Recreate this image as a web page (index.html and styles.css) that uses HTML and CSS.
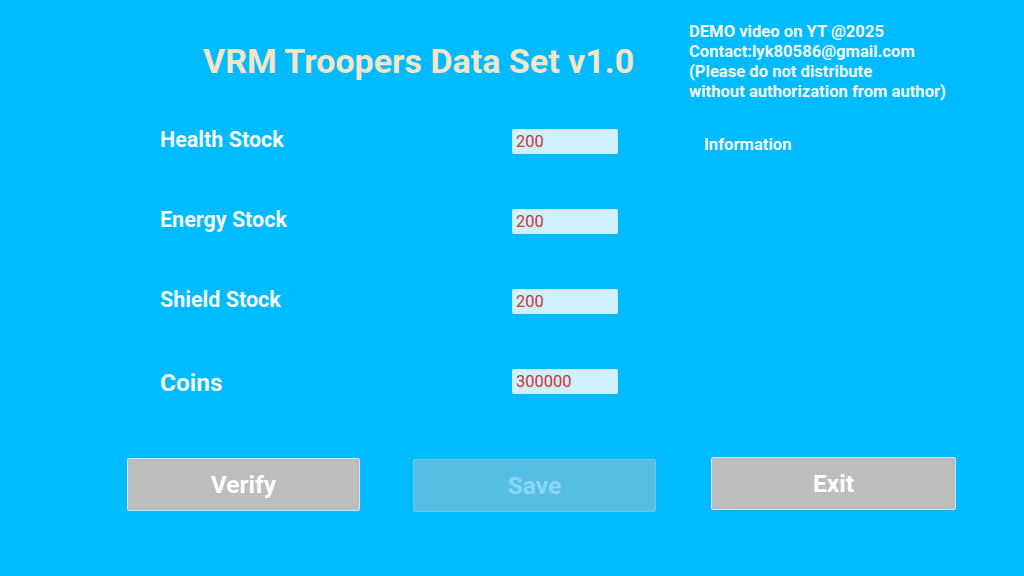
FILE: index.html
```html
<!DOCTYPE html>
<html lang="en">
<head>
<meta charset="utf-8">
<title>VRM Troopers Data Set v1.0</title>
<link rel="stylesheet" href="styles.css">
</head>
<body>
<div class="screen">
  <div class="top">
    <main class="main">
      <h1 class="title">VRM Troopers Data Set v1.0</h1>
      <form class="form">
        <div class="row">
          <label class="label">Health Stock</label>
          <input class="field" type="text" value="200">
        </div>
        <div class="row">
          <label class="label">Energy Stock</label>
          <input class="field" type="text" value="200">
        </div>
        <div class="row">
          <label class="label">Shield Stock</label>
          <input class="field" type="text" value="200">
        </div>
        <div class="row">
          <label class="label label-big">Coins</label>
          <input class="field" type="text" value="300000">
        </div>
      </form>
    </main>
    <aside class="aside">
      <p class="notes">DEMO video on YT @2025<br>Contact:lyk80586@gmail.com<br>(Please do not distribute<br>without authorization from author)</p>
      <p class="info">Information</p>
    </aside>
  </div>
  <div class="buttons">
    <button class="btn btn-verify">Verify</button>
    <button class="btn btn-save" disabled>Save</button>
    <button class="btn btn-exit">Exit</button>
  </div>
</div>
</body>
</html>
```
FILE: styles.css
```css
html, body {
  margin: 0;
  padding: 0;
}
body {
  width: 1024px;
  height: 576px;
  overflow: hidden;
  background: #00bbff;
  font-family: Roboto, "Liberation Sans", Arial, sans-serif;
}
.screen {
  display: flex;
  flex-direction: column;
}
.top {
  display: flex;
  align-items: flex-start;
}
.main {
  width: 689px;
  padding-top: 41px;
}
.title {
  margin: 0 0 0 203px;
  font-size: 34px;
  line-height: 40px;
  font-weight: 700;
  color: #f3e5c6;
  white-space: nowrap;
}
.form {
  margin: 47px 0 0 0;
  padding-left: 160px;
  display: flex;
  flex-direction: column;
  gap: 54px;
}
.row {
  display: flex;
  align-items: center;
  height: 26px;
}
.label {
  width: 352px;
  font-size: 21.5px;
  font-weight: 700;
  color: #f2f9ff;
  line-height: 26px;
  margin-top: -3px;
}
.label-big {
  font-size: 24.5px;
  margin-top: 3px;
}
.field {
  box-sizing: border-box;
  width: 106px;
  height: 25px;
  border: none;
  border-radius: 2px;
  background: #cff0ff;
  color: #d03030;
  font-family: Roboto, "Liberation Sans", Arial, sans-serif;
  font-size: 16.5px;
  padding: 0 0 0 4px;
  margin: 0;
  outline: none;
}
.aside {
  padding-top: 22px;
  color: #f2f9ff;
  font-weight: 700;
  font-size: 16.6px;
  line-height: 20px;
}
.notes {
  margin: 0;
  white-space: nowrap;
}
.info {
  margin: 33px 0 0 15px;
}
.buttons {
  display: flex;
  align-items: flex-start;
  margin-top: 63px;
  padding-left: 127px;
}
.btn {
  box-sizing: border-box;
  height: 53px;
  border: 1px solid #cfe6f0;
  border-radius: 2px;
  background: #bdbdbd;
  color: #ffffff;
  font-family: Roboto, "Liberation Sans", Arial, sans-serif;
  font-size: 24.5px;
  font-weight: 700;
  padding: 0;
}
.btn-verify {
  width: 233px;
  margin-top: 1px;
}
.btn-save {
  width: 243px;
  margin: 2px 0 0 53px;
  background: #55bee4;
  border-color: #6cc8ea;
  color: #8dd6f5;
}
.btn-exit {
  width: 245px;
  margin-left: 55px;
}
```
